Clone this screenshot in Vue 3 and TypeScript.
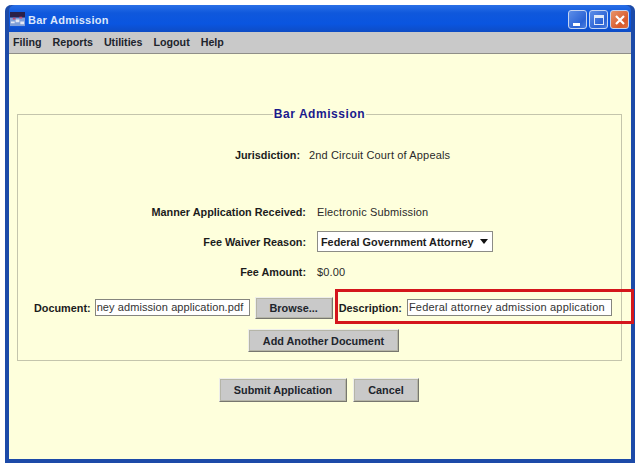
<script setup lang="ts">
const menus: string[] = ['Filing', 'Reports', 'Utilities', 'Logout', 'Help']
</script>

<template>
  <div class="page">
    <div class="window">
      <div class="titlebar">
        <svg class="appicon" width="15" height="15" viewBox="0 0 16 16">
          <rect x="0" y="0" width="16" height="6" fill="#2a2048" />
          <rect x="0" y="6" width="16" height="9" fill="#7f9fd8" />
          <path d="M1 10h4v2H1zM6 8h4v3H6zM11 10h4v3h-4z" fill="#e4e8f4" />
          <path d="M3 6h3v2H3zM10 5h3v2h-3z" fill="#c04a70" />
        </svg>
        <span class="wintitle">Bar Admission</span>
        <div class="controls">
          <span class="ctl"><i class="min"></i></span>
          <span class="ctl"><i class="max"></i></span>
          <span class="ctl close">
            <svg width="12" height="12" viewBox="0 0 12 12"><path d="M2 2l8 8M10 2l-8 8" stroke="#fff" stroke-width="2.2" fill="none" /></svg>
          </span>
        </div>
      </div>
      <div class="menubar">
        <span v-for="m in menus" :key="m">{{ m }}</span>
      </div>
      <div class="content">
        <fieldset class="group">
          <legend>Bar Admission</legend>
          <div class="row r-jur"><b class="lbl">Jurisdiction:</b><span class="val">2nd Circuit Court of Appeals</span></div>
          <div class="row r-man"><b class="lbl">Manner Application Received:</b><span class="val">Electronic Submission</span></div>
          <div class="row r-fee">
            <b class="lbl">Fee Waiver Reason:</b>
            <div class="select"><b>Federal Government Attorney</b><i class="arrow"></i></div>
          </div>
          <div class="row r-amt"><b class="lbl">Fee Amount:</b><span class="val">$0.00</span></div>
          <div class="docrow">
            <b>Document:</b>
            <div class="input doc"><span>ney admission application.pdf</span></div>
            <button class="btn browse">Browse...</button>
            <b class="desc-l">Description:</b>
            <div class="input desc">Federal attorney admission application</div>
          </div>
          <div class="addrow"><button class="btn add">Add Another Document</button></div>
        </fieldset>
        <div class="actions">
          <button class="btn submit">Submit Application</button>
          <button class="btn cancel">Cancel</button>
        </div>
      </div>
    </div>
    <div class="highlight"></div>
  </div>
</template>

<style>
html, body { margin: 0; background: #fff; }
</style>

<style scoped>
.page {
  position: relative;
  width: 640px;
  height: 468px;
  padding: 5px 5px 5px 5px;
  box-sizing: border-box;
  overflow: hidden;
  background: #fff;
  font-family: "Liberation Sans", Arial, sans-serif;
  color: #1c1c1c;
}
.window {
  height: 458px;
  display: flex;
  flex-direction: column;
  background: #1f52b8;
  border-radius: 6px 6px 0 0;
  border: solid #1c4aa8;
  border-width: 0 4px 4px 4px;
  box-sizing: border-box;
}
.titlebar {
  height: 27px;
  display: flex;
  align-items: center;
  padding: 2px 2px 0 1px;
  box-sizing: border-box;
  background: linear-gradient(#2a6fe6 0, #0f58dc 30%, #0a55e0 70%, #0e4cc4 100%);
  border-radius: 6px 6px 0 0;
}
.appicon { flex: none; }
.wintitle {
  margin-left: 3px;
  font-size: 11px;
  font-weight: bold;
  letter-spacing: 0.27px;
  color: #dce6fa;
}
.controls { margin-left: auto; display: flex; gap: 2px; }
.ctl {
  width: 19px;
  height: 19px;
  box-sizing: border-box;
  border: 1px solid #c4d4f2;
  border-radius: 3px;
  background: linear-gradient(135deg, #5d8ee8, #2a62d4 70%, #4d80e0);
  display: flex;
  align-items: center;
  justify-content: center;
  position: relative;
}
.ctl.close { background: linear-gradient(135deg, #e8946a, #d85a2c 70%, #e07040); }
.min { width: 7px; height: 3px; background: #fff; position: absolute; left: 4px; bottom: 2px; }
.max { width: 10px; height: 10px; border: 1px solid #dfe8f8; border-top-width: 3px; box-sizing: border-box; }
.menubar {
  height: 22px;
  display: flex;
  align-items: center;
  gap: 11px;
  padding: 0 0 2px 4px;
  box-sizing: border-box;
  background: #c9c9c9;
  border-bottom: 1px solid #8f8f88;
  font-size: 10.7px;
  font-weight: bold;
  color: #20242c;
}
.content {
  flex: 1;
  background: #feffdc;
  padding: 53px 9px 0 8px;
  display: flex;
  flex-direction: column;
}
.group {
  margin: 0;
  padding: 0;
  height: 254px;
  box-sizing: border-box;
  border: 1px solid #c4c5ac;
  min-width: 0;
}
legend {
  margin: 0 auto;
  padding: 0 1px;
  font-size: 12px;
  font-weight: bold;
  letter-spacing: 0.55px;
  color: #1a1a8c;
  line-height: 14px;
}
.row {
  display: grid;
  grid-template-columns: 288px 1fr;
  column-gap: 11px;
  align-items: center;
  font-size: 10.85px;
  height: 20px;
}
.lbl { text-align: right; }
.val { color: #2a2a2a; font-size: 11px; letter-spacing: 0.15px; }
.r-jur { margin-top: 24px; grid-template-columns: 282px 1fr; column-gap: 9px; }
.r-man { margin-top: 37px; }
.r-fee { margin-top: 9px; }
.r-amt { margin-top: 11px; }
.select {
  width: 176px;
  height: 21px;
  box-sizing: border-box;
  border: 1px solid #8c8c86;
  background: #fff;
  display: flex;
  align-items: center;
  padding-left: 3px;
  font-size: 10.85px;
}
.arrow {
  margin-left: 6px;
  width: 0;
  height: 0;
  border-left: 4.5px solid transparent;
  border-right: 4.5px solid transparent;
  border-top: 5px solid #111;
}
.docrow {
  margin-top: 14px;
  height: 23px;
  display: flex;
  align-items: center;
  padding-left: 16px;
  font-size: 10.85px;
}
.input {
  height: 17px;
  box-sizing: border-box;
  border: 1px solid #85857e;
  background: #fff;
  font-size: 11px;
  line-height: 15px;
  padding-left: 1px;
  overflow: hidden;
  white-space: nowrap;
  letter-spacing: 0.2px;
  color: #333;
}
.doc { width: 155px; margin-left: 4px; letter-spacing: 0.08px; }
.desc { width: 205px; margin-left: 5px; }
.browse { width: 78px; height: 22px; margin-left: 5px; }
.desc-l { margin-left: 6px; }
.btn {
  box-sizing: border-box;
  padding: 0;
  border: 1px solid;
  border-color: #eeeeea #77776f #77776f #eeeeea;
  background: #c9c9c9;
  font-family: inherit;
  font-size: 10.85px;
  font-weight: bold;
  color: #20242c;
  box-shadow: 0 0 0 1px #b5b5a8 inset;
}
.addrow { margin-top: 10px; display: flex; padding-left: 230px; }
.add { width: 151px; height: 23px; }
.actions {
  margin-top: 17px;
  display: flex;
  gap: 6px;
  padding-left: 202px;
}
.submit { width: 128px; height: 24px; }
.cancel { width: 66px; height: 24px; }
.highlight {
  position: absolute;
  left: 335px;
  top: 289px;
  width: 299px;
  height: 35px;
  box-sizing: border-box;
  border: 3px solid #d4161c;
}
</style>
